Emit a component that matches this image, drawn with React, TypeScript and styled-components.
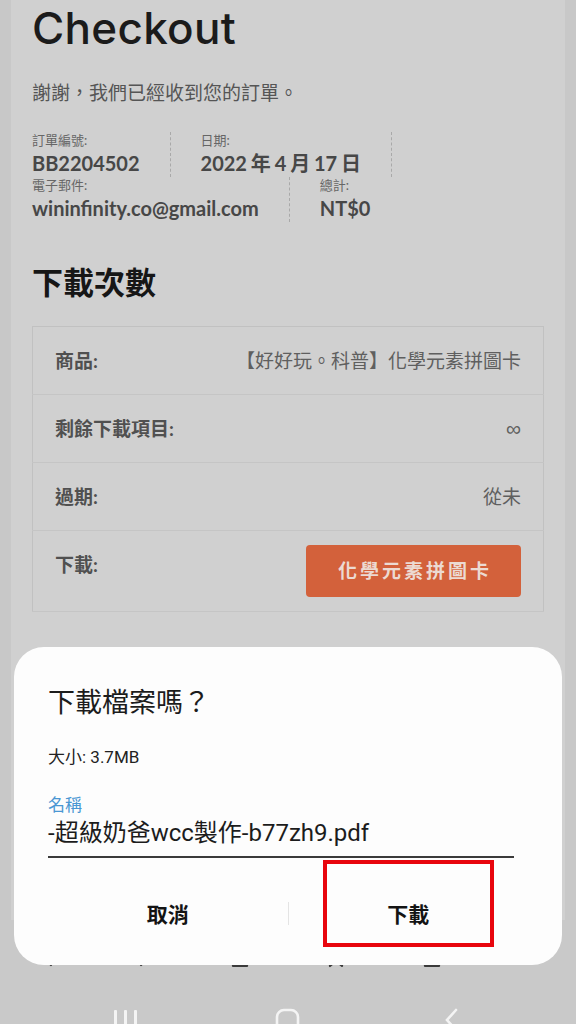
import React from "react";
import styled, { createGlobalStyle } from "styled-components";

const GlobalStyle = createGlobalStyle`
  html, body { margin: 0; padding: 0; background: #c9c9c9; }
  * { box-sizing: border-box; }
`;

const latin = `Lato, "Noto Sans CJK TC", sans-serif`;
const ui = `Roboto, "Noto Sans CJK TC", sans-serif`;

const Screen = styled.div`
  position: relative;
  width: 576px;
  height: 1024px;
  overflow: hidden;
  display: flex;
  flex-direction: column;
  background: #c9c9c9;
`;

const Viewport = styled.div`
  flex: 0 0 920px;
  display: flex;
  padding: 0 11px;
  background: #c8c8c8;
  overflow: hidden;
`;

const Page = styled.main`
  flex: 1;
  background: #d0d0d0;
  padding: 2px 21px 0;
  font-family: ${latin};
`;

const Title = styled.h1`
  margin: 0;
  font-family: Inter, sans-serif;
  font-weight: 500;
  font-size: 44px;
  line-height: 52px;
  color: #1b1b1b;
  letter-spacing: 0.3px;
`;

const Thanks = styled.p`
  margin: 25px 0 0;
  font-size: 19px;
  line-height: 28px;
  color: #555;
`;

const Overview = styled.ul`
  list-style: none;
  margin: 25px 0 0;
  padding: 0;
  display: flex;
  flex-wrap: wrap;
`;

const OverviewItem = styled.li<{ $last?: boolean }>`
  height: 45px;
  margin-right: 30px;
  padding-right: 30px;
  border-right: ${(p) => (p.$last ? "none" : "1px dashed #a9a9a9")};
  font-size: 13px;
  line-height: 17px;
  color: #666;
`;

const OverviewValue = styled.strong`
  display: block;
  font-size: 20px;
  line-height: 28px;
  font-weight: 700;
  color: #474747;
  word-spacing: -1px;
`;

const SectionTitle = styled.h2`
  margin: 40px 0 24px;
  font-size: 31px;
  line-height: 40px;
  font-weight: 700;
  color: #161616;
`;

const Table = styled.table`
  width: 100%;
  border-collapse: collapse;
  border: 1px solid #c1c1c1;
  font-size: 19px;
`;

const Row = styled.tr`
  border-bottom: 1px solid #c5c5c5;
`;

const Head = styled.th`
  padding: 15px 22px 14px;
  text-align: left;
  vertical-align: top;
  line-height: 38px;
  font-weight: 700;
  color: #505050;
  white-space: nowrap;
`;

const Cell = styled.td`
  padding: 15px 22px 14px;
  text-align: right;
  vertical-align: top;
  line-height: 38px;
  color: #5f5f5f;
`;

const Infinity = styled.span`
  font-family: "DejaVu Sans", sans-serif;
  font-size: 21px;
  font-weight: 300;
`;

const FileButton = styled.span`
  display: inline-flex;
  vertical-align: top;
  align-items: center;
  justify-content: center;
  height: 52px;
  margin-top: -1px;
  padding: 0 29px 0 32px;
  border-radius: 4px;
  background: #d3613b;
  color: #ecdad2;
  font-weight: 700;
  font-size: 19px;
  letter-spacing: 3px;
`;

const Toolbar = styled.div`
  flex: 0 0 64px;
  display: flex;
  align-items: flex-start;
  padding-top: 22px;
  background: #c9c9c9;
`;

const ToolSlot = styled.div`
  flex: 1;
  display: flex;
  justify-content: center;
  color: #3a3a3a;
`;

const NavBar = styled.div`
  flex: 0 0 70px;
  display: flex;
  justify-content: center;
  align-items: flex-start;
  gap: 136px;
  padding-top: 24px;
  background: #c9c9c9;
  color: #f4f4f4;
`;

const Dialog = styled.section`
  position: absolute;
  left: 14px;
  top: 647px;
  width: 548px;
  height: 318px;
  padding: 38px 34px 0;
  background: #fdfdfd;
  border-radius: 30px;
  font-family: ${ui};
  display: flex;
  flex-direction: column;
`;

const DialogTitle = styled.h3`
  margin: 0;
  font-size: 27px;
  line-height: 36px;
  font-weight: 400;
  color: #1c1c1c;
`;

const SizeText = styled.p`
  margin: 24px 0 0;
  font-size: 17px;
  line-height: 24px;
  color: #222;
`;

const FieldLabel = styled.label`
  margin-top: 25px;
  font-size: 17px;
  line-height: 22px;
  color: #4a97d3;
`;

const FieldValue = styled.div`
  margin-top: 2px;
  margin-right: 14px;
  padding-bottom: 8px;
  border-bottom: 2px solid #3a3a3a;
  font-size: 24px;
  line-height: 30px;
  color: #1c1c1c;
  white-space: nowrap;
`;

const Actions = styled.div`
  margin-top: 27px;
  height: 56px;
  display: grid;
  grid-template-columns: 1fr 1px 1fr;
  align-items: center;
`;

const ActionButton = styled.button`
  height: 56px;
  border: none;
  background: transparent;
  font-family: ${ui};
  font-size: 21px;
  font-weight: 700;
  color: #141414;
  padding: 0;
`;

const ActionDivider = styled.span`
  width: 1px;
  height: 23px;
  background: #e4e4e4;
`;

const Highlight = styled.div`
  position: absolute;
  left: 309px;
  top: 213px;
  width: 171px;
  height: 87px;
  border: 4px solid #e8050d;
  pointer-events: none;
`;

const rows: { label: string; value: React.ReactNode }[] = [
  { label: "商品:", value: "【好好玩。科普】化學元素拼圖卡" },
  { label: "剩餘下載項目:", value: <Infinity>∞</Infinity> },
  { label: "過期:", value: "從未" },
  { label: "下載:", value: <FileButton>化學元素拼圖卡</FileButton> },
];

const Icon = ({ d }: { d: string }) => (
  <svg width="26" height="26" viewBox="0 0 26 26" fill="none" stroke="currentColor" strokeWidth="2.2" strokeLinecap="round" strokeLinejoin="round">
    <path d={d} />
  </svg>
);

export default function App() {
  return (
    <>
      <GlobalStyle />
      <Screen>
        <Viewport>
          <Page>
            <Title>Checkout</Title>
            <Thanks>謝謝，我們已經收到您的訂單。</Thanks>
            <Overview>
              <OverviewItem>
                訂單編號:
                <OverviewValue>BB2204502</OverviewValue>
              </OverviewItem>
              <OverviewItem>
                日期:
                <OverviewValue>2022 年 4 月 17 日</OverviewValue>
              </OverviewItem>
              <OverviewItem>
                電子郵件:
                <OverviewValue>wininfinity.co@gmail.com</OverviewValue>
              </OverviewItem>
              <OverviewItem $last>
                總計:
                <OverviewValue>NT$0</OverviewValue>
              </OverviewItem>
            </Overview>
            <SectionTitle>下載次數</SectionTitle>
            <Table>
              <tbody>
                {rows.map((r) => (
                  <Row key={r.label}>
                    <Head>{r.label}</Head>
                    <Cell>{r.value}</Cell>
                  </Row>
                ))}
              </tbody>
            </Table>
          </Page>
        </Viewport>
        <Toolbar>
          <ToolSlot><Icon d="M16 3 L7 13 L16 23" /></ToolSlot>
          <ToolSlot><Icon d="M10 3 L19 13 L10 23" /></ToolSlot>
          <ToolSlot><Icon d="M3 12 L13 3 L23 12 M6 10 V24 H20 V10" /></ToolSlot>
          <ToolSlot><Icon d="M7 3 H19 V24 L13 19 L7 24 Z" /></ToolSlot>
          <ToolSlot><Icon d="M6 6 H20 V24 H6 Z" /></ToolSlot>
          <ToolSlot><Icon d="M4 8 H22 M4 14 H22 M4 20 H22" /></ToolSlot>
        </Toolbar>
        <NavBar>
          <svg width="26" height="26" viewBox="0 0 26 26" fill="currentColor">
            <rect x="1" y="2" width="3" height="22" rx="1" />
            <rect x="11" y="2" width="3" height="22" rx="1" />
            <rect x="21" y="2" width="3" height="22" rx="1" />
          </svg>
          <svg width="26" height="26" viewBox="0 0 26 26" fill="none" stroke="currentColor" strokeWidth="2.6">
            <rect x="2" y="2" width="21" height="24" rx="7" />
          </svg>
          <svg width="26" height="26" viewBox="0 0 26 26" fill="none" stroke="currentColor" strokeWidth="2.6" strokeLinecap="round">
            <path d="M19 2 L10 12 L19 22" />
          </svg>
        </NavBar>
        <Dialog>
          <DialogTitle>下載檔案嗎？</DialogTitle>
          <SizeText>大小: 3.7MB</SizeText>
          <FieldLabel>名稱</FieldLabel>
          <FieldValue>-超級奶爸wcc製作-b77zh9.pdf</FieldValue>
          <Actions>
            <ActionButton>取消</ActionButton>
            <ActionDivider />
            <ActionButton>下載</ActionButton>
          </Actions>
          <Highlight />
        </Dialog>
      </Screen>
    </>
  );
}
